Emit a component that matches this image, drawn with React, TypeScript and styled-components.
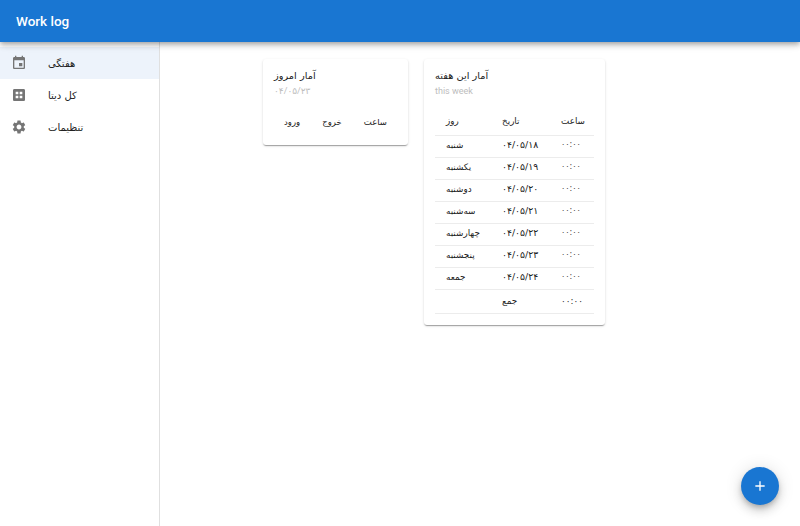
import * as React from 'react';
import styled, { createGlobalStyle } from 'styled-components';

const weekRows = [
  { day: 'شنبه', date: '۰۴/۰۵/۱۸' },
  { day: 'یکشنبه', date: '۰۴/۰۵/۱۹' },
  { day: 'دوشنبه', date: '۰۴/۰۵/۲۰' },
  { day: 'سه‌شنبه', date: '۰۴/۰۵/۲۱' },
  { day: 'چهارشنبه', date: '۰۴/۰۵/۲۲' },
  { day: 'پنجشنبه', date: '۰۴/۰۵/۲۳' },
  { day: 'جمعه', date: '۰۴/۰۵/۲۴' },
];

const icons = {
  event:
    'M17 12h-5v5h5v-5zM16 1v2H8V1H6v2H5c-1.11 0-1.99.9-1.99 2L3 19c0 1.1.89 2 2 2h14c1.1 0 2-.9 2-2V5c0-1.1-.9-2-2-2h-1V1h-2zm3 18H5V8h14v11z',
  grid:
    'M19 3H5c-1.1 0-2 .9-2 2v14c0 1.1.9 2 2 2h14c1.1 0 2-.9 2-2V5c0-1.1-.9-2-2-2zM11 17H7v-4h4v4zm0-6H7V7h4v4zm6 6h-4v-4h4v4zm0-6h-4V7h4v4z',
  settings:
    'M19.14 12.94c.04-.3.06-.61.06-.94 0-.32-.02-.64-.07-.94l2.03-1.58c.18-.14.23-.41.12-.61l-1.92-3.32c-.12-.22-.37-.29-.59-.22l-2.39.96c-.5-.38-1.03-.7-1.62-.94l-.36-2.54c-.04-.24-.24-.41-.48-.41h-3.84c-.24 0-.43.17-.47.41l-.36 2.54c-.59.24-1.13.57-1.62.94l-2.39-.96c-.22-.08-.47 0-.59.22L2.74 8.87c-.12.21-.08.47.12.61l2.03 1.58c-.05.3-.09.63-.09.94s.02.64.07.94l-2.03 1.58c-.18.14-.23.41-.12.61l1.92 3.32c.12.22.37.29.59.22l2.39-.96c.5.38 1.03.7 1.62.94l.36 2.54c.05.24.24.41.48.41h3.84c.24 0 .44-.17.47-.41l.36-2.54c.59-.24 1.13-.56 1.62-.94l2.39.96c.22.08.47 0 .59-.22l1.92-3.32c.12-.22.07-.47-.12-.61l-2.01-1.58zM12 15.6c-1.98 0-3.6-1.62-3.6-3.6s1.62-3.6 3.6-3.6 3.6 1.62 3.6 3.6-1.62 3.6-3.6 3.6z',
};

const Icon = ({ d }: { d: string }) => (
  <NavIcon viewBox="0 0 24 24" fillRule="evenodd">
    <path d={d} />
  </NavIcon>
);

const App = () => (
  <Page>
    <GlobalStyle />
    <AppBar>
      <AppTitle>Work log</AppTitle>
    </AppBar>
    <Body>
      <Drawer>
        <NavItem active>
          <Icon d={icons.event} />
          <NavLabel>هفتگی</NavLabel>
        </NavItem>
        <NavItem>
          <Icon d={icons.grid} />
          <NavLabel>کل دیتا</NavLabel>
        </NavItem>
        <NavItem>
          <Icon d={icons.settings} />
          <NavLabel>تنظیمات</NavLabel>
        </NavItem>
      </Drawer>
      <Main>
        <Card width={145}>
          <CardTitle>آمار امروز</CardTitle>
          <CardSub>۰۴/۰۵/۲۳</CardSub>
          <TodayRow>
            <TodayCell>ورود</TodayCell>
            <TodayCell>خروج</TodayCell>
            <TodayCell>ساعت</TodayCell>
          </TodayRow>
        </Card>
        <Card width={181}>
          <CardTitle>آمار این هفته</CardTitle>
          <CardSub>this week</CardSub>
          <WeekTable>
            <colgroup>
              <col width={56} />
              <col width={59} />
              <col width={44} />
            </colgroup>
            <thead>
              <tr>
                <HeadCell>روز</HeadCell>
                <HeadCell>تاریخ</HeadCell>
                <HeadCell>ساعت</HeadCell>
              </tr>
            </thead>
            <tbody>
              {weekRows.map(row => (
                <tr key={row.date}>
                  <Cell>{row.day}</Cell>
                  <DateCell>{row.date}</DateCell>
                  <TimeCell>۰۰:۰۰</TimeCell>
                </tr>
              ))}
              <tr>
                <TotalCell />
                <TotalCell>جمع</TotalCell>
                <TotalCell>۰۰:۰۰</TotalCell>
              </tr>
            </tbody>
          </WeekTable>
        </Card>
      </Main>
    </Body>
    <Fab aria-label="add">
      <svg viewBox="0 0 24 24" width="16" height="16" fill="#fff">
        <path d="M19 13h-6v6h-2v-6H5v-2h6V5h2v6h6v2z" />
      </svg>
    </Fab>
  </Page>
);

const GlobalStyle = createGlobalStyle`
  html, body {
    margin: 0;
    height: 100%;
    background: #fff;
    font-family: 'DejaVu Sans', sans-serif;
  }
  #root {
    height: 100%;
  }
`;

const Page = styled.div`
  display: flex;
  flex-direction: column;
  height: 526px;
  overflow: hidden;
`;

const AppBar = styled.header`
  flex: 0 0 42px;
  display: flex;
  align-items: center;
  padding: 0 16px;
  background: #1976d2;
  box-shadow: 0 2px 4px -1px rgba(0, 0, 0, 0.2), 0 4px 5px rgba(0, 0, 0, 0.14),
    0 1px 10px rgba(0, 0, 0, 0.12);
  z-index: 2;
`;

const AppTitle = styled.div`
  color: #fff;
  font: 500 13.5px Roboto, sans-serif;
`;

const Body = styled.div`
  flex: 1;
  display: flex;
  min-height: 0;
`;

const Drawer = styled.nav`
  flex: 0 0 160px;
  box-sizing: border-box;
  padding-top: 5px;
  border-right: 1px solid #e0e0e0;
`;

const NavItem = styled.div<{ active?: boolean }>`
  display: flex;
  align-items: center;
  height: 32px;
  padding-left: 11px;
  background: ${props => (props.active ? '#edf3fb' : 'transparent')};
`;

const NavIcon = styled.svg`
  width: 16px;
  height: 16px;
  fill: #757575;
`;

const NavLabel = styled.span`
  margin-left: 21px;
  font-size: 10px;
  color: #212121;
`;

const Main = styled.main`
  flex: 1;
  display: flex;
  align-items: flex-start;
  gap: 16px;
  padding: 17px 0 0 103px;
`;

const Card = styled.section<{ width: number }>`
  box-sizing: border-box;
  width: ${props => props.width}px;
  padding: 10px 11px 11px;
  background: #fff;
  border-radius: 3px;
  box-shadow: 0 2px 1px -1px rgba(0, 0, 0, 0.2), 0 1px 1px rgba(0, 0, 0, 0.14),
    0 1px 3px rgba(0, 0, 0, 0.12);
`;

const CardTitle = styled.div`
  font-size: 9.8px;
  line-height: 14px;
  color: #212121;
`;

const CardSub = styled.div`
  margin-top: 1px;
  font: 9px/14px Roboto, 'DejaVu Sans', sans-serif;
  color: #bdbdbd;
`;

const TodayRow = styled.div`
  display: flex;
  justify-content: space-between;
  padding: 17px 10px 5px;
`;

const TodayCell = styled.span`
  font-size: 8.5px;
  line-height: 14px;
  color: #212121;
`;

const WeekTable = styled.table`
  width: 159px;
  margin-top: 6px;
  border-collapse: collapse;
  table-layout: fixed;
`;

const HeadCell = styled.th`
  height: 29px;
  padding: 2px 0 0 11px;
  font-size: 8.8px;
  font-weight: 400;
  text-align: left;
  color: #212121;
  border-bottom: 1px solid #ececec;
`;

const Cell = styled.td`
  height: 22px;
  padding: 0 0 4px 11px;
  box-sizing: border-box;
  font-size: 8.8px;
  color: #212121;
  white-space: nowrap;
  border-bottom: 1px solid #ececec;
`;

const DateCell = styled(Cell)`
  font-size: 9.3px;
`;

const TimeCell = styled(Cell)`
  font-size: 8px;
  color: #424242;
`;

const TotalCell = styled(Cell)`
  height: 24px;
  padding-bottom: 1px;
  font-weight: 500;
`;

const Fab = styled.button`
  position: absolute;
  right: 21px;
  bottom: 21px;
  display: flex;
  align-items: center;
  justify-content: center;
  width: 38px;
  height: 38px;
  padding: 0;
  border: 0;
  border-radius: 50%;
  background: #1976d2;
  box-shadow: 0 3px 5px -1px rgba(0, 0, 0, 0.2), 0 6px 10px rgba(0, 0, 0, 0.14),
    0 1px 18px rgba(0, 0, 0, 0.12);
`;

export default App;
